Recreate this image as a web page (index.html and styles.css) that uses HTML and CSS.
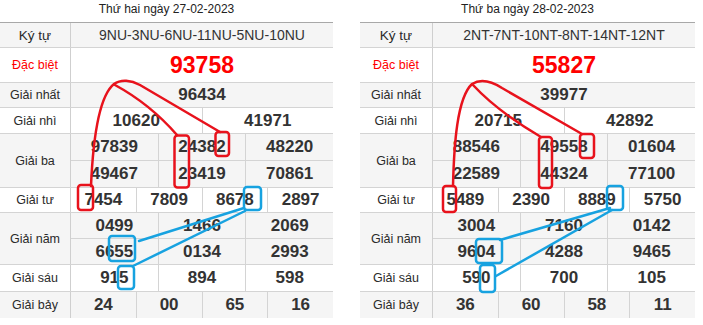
FILE: index.html
```html
<!DOCTYPE html>
<html lang="vi">
<head>
<meta charset="utf-8">
<title>Kết quả xổ số</title>
<link rel="stylesheet" href="styles.css">
</head>
<body>
<div class="page">
  <section class="day day-left">
    <div class="title">Thứ hai ngày 27-02-2023</div>
    <div class="table">
      <div class="row alt h-kt"><div class="label label-kt">Ký tự</div><div class="vals"><div class="line"><div class="cell code">9NU-3NU-6NU-11NU-5NU-10NU</div></div></div></div>
      <div class="row h-db"><div class="label red">Đặc biệt</div><div class="vals"><div class="line"><div class="cell special">93758</div></div></div></div>
      <div class="row alt h-25"><div class="label">Giải nhất</div><div class="vals"><div class="line"><div class="cell">96434</div></div></div></div>
      <div class="row h-26"><div class="label">Giải nhì</div><div class="vals"><div class="line"><div class="cell">10620</div><div class="cell">41971</div></div></div></div>
      <div class="row alt h-ba"><div class="label">Giải ba</div><div class="vals"><div class="line ba"><div class="cell">97839</div><div class="cell">24382</div><div class="cell">48220</div></div><div class="line ba"><div class="cell">49467</div><div class="cell">23419</div><div class="cell">70861</div></div></div></div>
      <div class="row h-25"><div class="label">Giải tư</div><div class="vals"><div class="line"><div class="cell">7454</div><div class="cell">7809</div><div class="cell">8678</div><div class="cell">2897</div></div></div></div>
      <div class="row alt h-nam"><div class="label">Giải năm</div><div class="vals"><div class="line"><div class="cell">0499</div><div class="cell">1466</div><div class="cell">2069</div></div><div class="line"><div class="cell">6655</div><div class="cell">0134</div><div class="cell">2993</div></div></div></div>
      <div class="row h-27"><div class="label">Giải sáu</div><div class="vals"><div class="line"><div class="cell">915</div><div class="cell">894</div><div class="cell">598</div></div></div></div>
      <div class="row alt h-bay"><div class="label">Giải bảy</div><div class="vals"><div class="line"><div class="cell">24</div><div class="cell">00</div><div class="cell">65</div><div class="cell">16</div></div></div></div>
    </div>
  </section>
  <section class="day day-right">
    <div class="title">Thứ ba ngày 28-02-2023</div>
    <div class="table">
      <div class="row alt h-kt"><div class="label label-kt">Ký tự</div><div class="vals"><div class="line"><div class="cell code">2NT-7NT-10NT-8NT-14NT-12NT</div></div></div></div>
      <div class="row h-db"><div class="label red">Đặc biệt</div><div class="vals"><div class="line"><div class="cell special">55827</div></div></div></div>
      <div class="row alt h-25"><div class="label">Giải nhất</div><div class="vals"><div class="line"><div class="cell">39977</div></div></div></div>
      <div class="row h-26"><div class="label">Giải nhì</div><div class="vals"><div class="line"><div class="cell">20715</div><div class="cell">42892</div></div></div></div>
      <div class="row alt h-ba"><div class="label">Giải ba</div><div class="vals"><div class="line ba"><div class="cell">88546</div><div class="cell">49558</div><div class="cell">01604</div></div><div class="line ba"><div class="cell">22589</div><div class="cell">44324</div><div class="cell">77100</div></div></div></div>
      <div class="row h-25"><div class="label">Giải tư</div><div class="vals"><div class="line"><div class="cell">5489</div><div class="cell">2390</div><div class="cell">8889</div><div class="cell">5750</div></div></div></div>
      <div class="row alt h-nam"><div class="label">Giải năm</div><div class="vals"><div class="line"><div class="cell">3004</div><div class="cell">7160</div><div class="cell">0142</div></div><div class="line"><div class="cell">9604</div><div class="cell">4288</div><div class="cell">9465</div></div></div></div>
      <div class="row h-27"><div class="label">Giải sáu</div><div class="vals"><div class="line"><div class="cell">590</div><div class="cell">700</div><div class="cell">105</div></div></div></div>
      <div class="row alt h-bay"><div class="label">Giải bảy</div><div class="vals"><div class="line"><div class="cell">36</div><div class="cell">60</div><div class="cell">58</div><div class="cell">11</div></div></div></div>
    </div>
  </section>

  <svg class="marks" width="703" height="325" viewBox="0 0 703 325" aria-hidden="true">
    <g class="mark-red">
      <rect x="78" y="185" width="15" height="25" rx="3"/>
      <rect x="174.5" y="135.5" width="14.5" height="52" rx="3"/>
      <rect x="215.5" y="132" width="13.5" height="24" rx="3"/>
      <path d="M91 186 C93 140 99 96 114 84 C121 79 131 80 140 85 L220 132"/>
      <path d="M115 85 Q150 104 177 135"/>

      <rect x="443" y="186" width="13" height="26" rx="3"/>
      <rect x="539" y="137" width="13" height="51" rx="3"/>
      <rect x="580" y="134" width="14" height="24" rx="3"/>
      <path d="M453 186 C454 145 457 98 472 84 C480 79 491 81 502 88 L582 134"/>
      <path d="M473 85 Q497 111 541 137"/>
    </g>
    <g class="mark-blue">
      <rect x="244" y="187" width="17" height="23" rx="3"/>
      <rect x="109" y="236" width="26" height="25" rx="3"/>
      <rect x="118" y="266" width="16" height="23" rx="3"/>
      <path d="M139 241 L244 208"/>
      <path d="M133 266 L245 211"/>

      <rect x="607" y="186" width="16" height="24" rx="3"/>
      <rect x="476" y="239" width="26" height="24" rx="3"/>
      <rect x="480" y="265" width="15" height="27" rx="3"/>
      <path d="M500 240 L610 208"/>
      <path d="M496 276 L612 210"/>
    </g>
  </svg>
</div>
</body>
</html>
```

FILE: styles.css
```css
* { box-sizing: border-box; }

html, body {
  margin: 0;
  padding: 0;
  background: #fff;
}

body {
  font-family: "Liberation Sans", Arial, sans-serif;
  color: #333;
}

.page {
  position: relative;
  width: 703px;
  height: 325px;
  display: flex;
  gap: 27px;
  align-items: flex-start;
}

.day-left { width: 333px; }
.day-right { width: 335px; }

.title {
  height: 22px;
  line-height: 19px;
  font-size: 12px;
  text-align: center;
  color: #222;
}

.table {
  border-top: 1px solid #a8a8a8;
}

.row {
  display: flex;
  border-bottom: 1px solid #d4d4d4;
}

.row.alt { background: #f5f5f5; }

.h-kt { height: 25px; }
.h-db { height: 35px; }
.h-25 { height: 25px; }
.h-26 { height: 26px; }
.h-27 { height: 27px; }
.h-ba { height: 54px; }
.h-nam { height: 52px; }
.h-bay { height: 26px; border-bottom: none; }

.label {
  width: 71px;
  flex: none;
  border-right: 1px solid #cfcfcf;
  display: flex;
  align-items: center;
  justify-content: center;
  font-size: 12.5px;
  color: #2a2a2a;
}

.day-right .label { width: 73px; }

.label-kt { font-size: 13.5px; }

.label.red { color: #f00; }

.vals {
  flex: 1;
  display: flex;
  flex-direction: column;
}

.line {
  flex: 1;
  display: flex;
}

.line + .line { border-top: 1px solid #d4d4d4; }

.cell {
  flex: 1;
  display: flex;
  align-items: center;
  justify-content: center;
  font-size: 17px;
  font-weight: bold;
  color: #333;
}

.cell + .cell { border-left: 1px solid #d4d4d4; }

.cell.code {
  font-size: 14px;
  font-weight: normal;
  color: #333;
}

.cell.special {
  font-size: 23px;
  color: #f00;
}

.marks {
  position: absolute;
  left: 0;
  top: 0;
  pointer-events: none;
}

.marks rect,
.marks path {
  fill: none;
  stroke-width: 2.5;
  stroke-linecap: round;
  stroke-linejoin: round;
}

.mark-red rect,
.mark-red path { stroke: #e8121c; }

.mark-blue rect,
.mark-blue path { stroke: #17a2e0; }
```
